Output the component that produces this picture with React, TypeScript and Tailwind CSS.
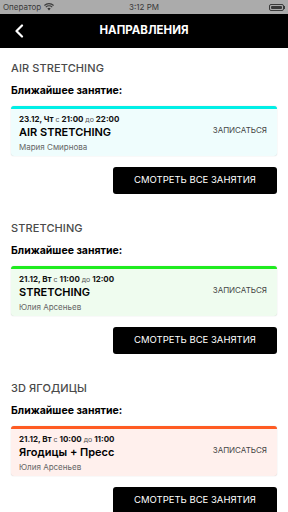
import React from 'react';

type Section = {
    title: string;
    date: string;
    from: string;
    to: string;
    name: string;
    coach: string;
    bar: string;
    bg: string;
};

const sections: Section[] = [
    { title: 'AIR STRETCHING', date: '23.12, Чт', from: '21:00', to: '22:00', name: 'AIR STRETCHING', coach: 'Мария Смирнова', bar: 'border-[#00efe6]', bg: 'bg-[#effdfd]' },
    { title: 'STRETCHING', date: '21.12, Вт', from: '11:00', to: '12:00', name: 'STRETCHING', coach: 'Юлия Арсеньев', bar: 'border-[#1fec1f]', bg: 'bg-[#effcef]' },
    { title: '3D ЯГОДИЦЫ', date: '21.12, Вт', from: '10:00', to: '11:00', name: 'Ягодицы + Пресс', coach: 'Юлия Арсеньев', bar: 'border-[#ff5b22]', bg: 'bg-[#fff0ed]' },
];

function StatusBar() {
    return (
        <div className="h-[14px] bg-[#ababab] flex items-center justify-between px-[3px] text-[8px] text-[#3a3a3a] relative">
            <div className="flex items-center gap-[3px]">
                <span>Оператор</span>
                <svg width="10" height="8" viewBox="0 0 10 8">
                    <path d="M5 7.5 L3.3 5.6 A2.5 2.5 0 0 1 6.7 5.6 Z" fill="#3a3a3a" />
                    <path d="M1.8 4.1 A4.6 4.6 0 0 1 8.2 4.1" stroke="#3a3a3a" strokeWidth="1.1" fill="none" />
                    <path d="M0.4 2.5 A6.6 6.6 0 0 1 9.6 2.5" stroke="#3a3a3a" strokeWidth="1.1" fill="none" />
                </svg>
            </div>
            <span className="absolute left-1/2 -translate-x-1/2">3:12 PM</span>
            <div className="flex items-center">
                <div className="w-[15px] h-[7px] border border-[#3a3a3a] rounded-[2px] p-[1px]">
                    <div className="w-full h-full bg-[#3a3a3a] rounded-[1px]" />
                </div>
                <div className="w-[1px] h-[3px] bg-[#3a3a3a] ml-[0.5px]" />
            </div>
        </div>
    );
}

function NavBar() {
    return (
        <div className="h-[34px] bg-black flex items-center relative">
            <svg className="absolute left-[14px] top-[10px]" width="10" height="14" viewBox="0 0 10 14">
                <path d="M8 1.5 L2.5 7 L8 12.5" stroke="white" strokeWidth="2.2" fill="none" strokeLinecap="round" strokeLinejoin="round" />
            </svg>
            <div className="w-full text-center text-white font-bold text-[11.5px]">НАПРАВЛЕНИЯ</div>
        </div>
    );
}

function Block({ s }: { s: Section }) {
    return (
        <div className="pb-[27px]">
            <div className="h-[14px] leading-[14px] text-[11px] font-medium text-[#4a4a4a] tracking-[0.1px]">{s.title}</div>
            <div className="mt-[9px] h-[14px] leading-[14px] text-[10.5px] font-bold text-black">Ближайшее занятие:</div>
            <div className={`mt-[8px] rounded-[3px] border-t-[3px] ${s.bar} ${s.bg} shadow-[0_0_1px_rgba(0,0,0,0.25)] pl-[8px] pr-[10px] pt-[5px] pb-[4px] flex items-center`}>
                <div className="flex-1">
                    <div className="h-[10px] leading-[10px] text-[8px] font-bold text-[#111]">
                        {s.date} <span className="font-normal text-[7px] text-[#555]">с</span> {s.from} <span className="font-normal text-[7px] text-[#555]">до</span> {s.to}
                    </div>
                    <div className="h-[14px] leading-[14px] mt-[1px] text-[11px] font-semibold text-black">{s.name}</div>
                    <div className="h-[10px] leading-[10px] mt-[3px] text-[8px] text-[#666]">{s.coach}</div>
                </div>
                <div className="text-[8px] text-[#444] -mt-[6px]">ЗАПИСАТЬСЯ</div>
            </div>
            <div className="flex justify-end mt-[11px]">
                <div className="w-[164px] h-[27px] bg-black rounded-[3px] flex items-center justify-center text-white text-[9.5px]">
                    СМОТРЕТЬ ВСЕ ЗАНЯТИЯ
                </div>
            </div>
        </div>
    );
}

export default function App() {
    return (
        <div className="w-[288px] h-[512px] overflow-hidden bg-white" style={{ fontFamily: 'Inter, "Noto Sans", sans-serif' }}>
            <StatusBar />
            <NavBar />
            <div className="px-[11px] pt-[13px]">
                {sections.map((s) => (
                    <Block key={s.title} s={s} />
                ))}
            </div>
        </div>
    );
}
